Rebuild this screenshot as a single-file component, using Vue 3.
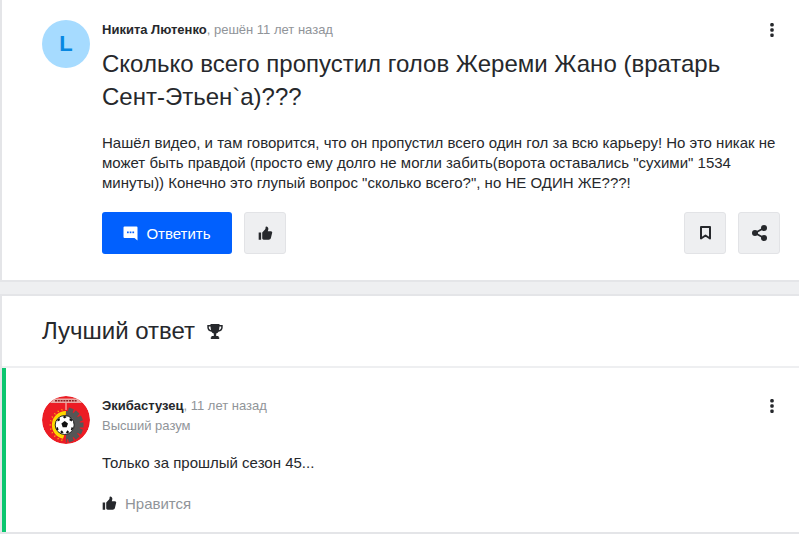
<script setup>
const thumb = "M1 9.500h3.600V20H1zM6.200 9.600l4.100-4.400c.5-.6.8-1.300.8-2.100V1.600c0-.6.5-1 1.100-1 1.700.1 3 1.500 3 3.300 0 1.200-.4 2.500-.9 3.700h4.700c1.200 0 2.100 1.100 1.800 2.300l-1.900 7.600c-.4 1.500-1.700 2.500-3.200 2.500H8.300c-1.200 0-2.100-.9-2.100-2.100z";
const teeth = [-72, -48, -24, 0, 24, 48, 72, 96, 120];
const rays = [105, 120, 135, 150, 165, 180, 195, 210, 225, 240, 255];
</script>

<template>
  <main class="page">
    <section class="card question">
      <div class="avatar letter">L</div>
      <div class="body">
        <div class="meta-row">
          <p class="meta"><b>Никита Лютенко</b>, решён 11 лет назад</p>
          <svg class="dots" width="4" height="14" viewBox="0 0 4 14"><rect x="0.300" y="0" width="3.400" height="3.400" rx="1.200"/><rect x="0.300" y="5.300" width="3.400" height="3.400" rx="1.200"/><rect x="0.300" y="10.600" width="3.400" height="3.400" rx="1.200"/></svg>
        </div>
        <h1>Сколько всего пропустил голов Жереми Жано (вратарь Сент-Этьен`а)???</h1>
        <p class="text">Нашёл видео, и там говорится, что он пропустил всего один гол за всю карьеру! Но это никак не может быть правдой (просто ему долго не могли забить(ворота оставались "сухими" 1534 минуты)) Конечно это глупый вопрос "сколько всего?", но НЕ ОДИН ЖЕ???!</p>
        <div class="actions">
          <button class="primary">
            <svg width="15" height="15" viewBox="0 0 15 15"><path fill="#fff" d="M1.500 0.500h12a1 1 0 0 1 1 1v13l-3-2.600h-10a1 1 0 0 1-1-1v-9.400a1 1 0 0 1 1-1z"/><rect x="4" y="5.500" width="1.700" height="1.700" fill="#0160fe"/><rect x="6.700" y="5.500" width="1.700" height="1.700" fill="#0160fe"/><rect x="9.400" y="5.500" width="1.700" height="1.700" fill="#0160fe"/></svg>
            Ответить
          </button>
          <button class="square">
            <svg width="15" height="15" viewBox="0 0 22 22"><path fill="#26282c" :d="thumb"/></svg>
          </button>
          <div class="spacer"></div>
          <button class="square">
            <svg width="11" height="14" viewBox="0 0 11 14"><path fill="none" stroke="#26282c" stroke-width="2" stroke-linejoin="round" d="M1 1h9v11.500l-4.500-3-4.500 3z"/></svg>
          </button>
          <button class="square">
            <svg width="15" height="16" viewBox="0 0 15 16"><g fill="#26282c"><circle cx="12" cy="3" r="3"/><circle cx="3" cy="8" r="3"/><circle cx="12" cy="13" r="3"/></g><path fill="none" stroke="#26282c" stroke-width="1.800" d="M12 3 3 8l9 5"/></svg>
          </button>
        </div>
      </div>
    </section>

    <section class="card answers">
      <header class="answers-head">
        <h2>Лучший ответ</h2>
        <svg width="16" height="15" viewBox="0 0 16 15"><path fill="#26282c" d="M3.500 0h9v1h3.200v2.500c0 2.300-1.700 4-4.200 4.300-.6.900-1.400 1.500-2.300 1.800V12h2.300v1.200h.7V15H3.800v-1.800h.7V12h2.300V9.600c-.9-.3-1.700-.9-2.300-1.800C2 7.500.3 5.800.3 3.500V1h3.200zM1.800 2.500v1c0 1.200.8 2.200 2.300 2.600-.3-1-.5-2.300-.6-3.600zm12.400 0h-1.700c-.1 1.300-.3 2.600-.6 3.600 1.500-.4 2.300-1.400 2.300-2.600z"/></svg>
      </header>
      <article class="answer">
        <svg class="avatar" width="48" height="48" viewBox="0 0 48 48">
          <defs>
            <clipPath id="logo-clip"><circle cx="24" cy="24" r="24"/></clipPath>
            <clipPath id="gear-half"><rect x="24" y="0" width="24" height="48"/></clipPath>
          </defs>
          <g clip-path="url(#logo-clip)">
            <rect width="48" height="48" fill="#ec1c24"/>
            <path fill="#e9a9a4" d="M8 7 12 2.500h24L40 7z"/>
            <path stroke="#8a2020" stroke-width="1.500" stroke-dasharray="2 .8" d="M13 4.700h22"/>
            <path stroke="#f7d9c9" stroke-width="1" d="M24 7v7"/>
            <g fill="#565656" clip-path="url(#gear-half)">
              <circle cx="24" cy="29" r="14"/>
              <rect v-for="a in teeth" :key="a" x="36" y="26.500" width="5.500" height="5" :transform="`rotate(${a} 24 29)`"/>
            </g>
            <g fill="#fdd800">
              <rect v-for="a in rays" :key="a" x="39" y="28.600" width="1.500" height="0.900" :transform="`rotate(${a} 24 29)`"/>
            </g>
            <path fill="#fdd800" d="M24 15a14 14 0 0 0-3 27.700l1-2.700 2-25z"/>
            <circle cx="22.700" cy="29" r="9.500" fill="#fff" stroke="#222" stroke-width="1"/>
            <path fill="#111" d="M22.700 25l3.300 2.400-1.300 3.800h-4l-1.300-3.800zM15.700 25.500l2.300-1.200-.5-2.400-2.300 1.700zM29.700 25.500l-2.300-1.200.5-2.400 2.300 1.700zM18.200 36l1.600-1.700 1.800 2.200-2 .9zM27.200 36l-1.600-1.700-1.800 2.200 2 .9zM14 32l1.700-1 .9 2.700-1.200.6zM31.400 32l-1.700-1-.9 2.700 1.200.6zM22.700 19.800l-2 1.200 2 1.400 2-1.400z"/>
          </g>
        </svg>
        <div class="body">
          <div class="meta-row">
            <p class="meta"><b>Экибастузец</b>, 11 лет назад</p>
            <svg class="dots" width="4" height="14" viewBox="0 0 4 14"><rect x="0.300" y="0" width="3.400" height="3.400" rx="1.200"/><rect x="0.300" y="5.300" width="3.400" height="3.400" rx="1.200"/><rect x="0.300" y="10.600" width="3.400" height="3.400" rx="1.200"/></svg>
          </div>
          <p class="rank">Высший разум</p>
          <p class="text short">Только за прошлый сезон 45...</p>
          <div class="like">
            <svg width="15" height="15" viewBox="0 0 22 22"><path fill="#26282c" :d="thumb"/></svg>
            <span>Нравится</span>
          </div>
        </div>
      </article>
    </section>
  </main>
</template>

<style>
html, body { margin: 0; background: #eeeff1; }
</style>

<style scoped>
.page {
  height: 534px;
  overflow: hidden;
  background: #eeeff1;
  font-family: "Liberation Sans", Arial, sans-serif;
  color: #26282c;
}
p, h1, h2 { margin: 0; font-weight: 400; }
.card {
  background: #fff;
  border: 2px solid #e4e5e8;
  border-width: 0 0 2px 2px;
}
.question {
  display: flex;
  gap: 12px;
  height: 280px;
  box-sizing: content-box;
  padding: 0 19px 0 40px;
  margin-bottom: 12px;
}
.avatar { width: 48px; height: 48px; flex: none; border-radius: 50%; margin-top: 20px; }
.letter {
  display: flex;
  align-items: center;
  justify-content: center;
  background: #a6dbff;
  color: #0887e1;
  font-size: 22px;
  font-weight: 700;
}
.body { flex: 1; min-width: 0; }
.meta-row { display: flex; justify-content: space-between; align-items: center; padding-top: 22px; height: 16px; padding-right: 6px; }
.dots { fill: #26282c; flex: none; }
.meta { font-size: 13px; line-height: 16px; color: #909499; }
.meta b { font-weight: 700; color: #26282c; }
h1 { font-size: 24px; line-height: 33px; margin-top: 9px; padding-right: 30px; }
.text { font-size: 15px; line-height: 20px; margin-top: 20px; }
.actions { display: flex; gap: 12px; margin-top: 19px; }
.spacer { flex: 1; }
button {
  display: flex;
  flex: none;
  align-items: center;
  justify-content: center;
  height: 42px;
  box-sizing: border-box;
  border-radius: 3px;
  font: inherit;
  padding: 0;
}
.primary { width: 130px; gap: 8px; background: #0160fe; border: 0; color: #fff; font-size: 15px; }
.square { width: 42px; background: #eeeff1; border: 1px solid #e2e3e6; }
.answers { border-top: 2px solid #e4e5e8; height: 240px; box-sizing: border-box; }
.answers-head {
  display: flex;
  align-items: center;
  gap: 12px;
  height: 70px;
  padding-left: 40px;
  border-bottom: 2px solid #eeeff1;
  box-sizing: content-box;
}
h2 { font-size: 24px; line-height: 70px; }
.answer {
  display: flex;
  gap: 12px;
  padding: 0 19px 0 36px;
  border-left: 4px solid #0cc66f;
  height: 164px;
}
.answer .avatar { margin-top: 28px; }
.answer .meta-row { padding-top: 30px; }
.rank { font-size: 13px; line-height: 16px; color: #909499; margin-top: 4px; }
.short { margin-top: 19px; }
.like { display: flex; align-items: center; gap: 8px; margin-top: 22px; font-size: 15px; color: #909499; }
</style>
